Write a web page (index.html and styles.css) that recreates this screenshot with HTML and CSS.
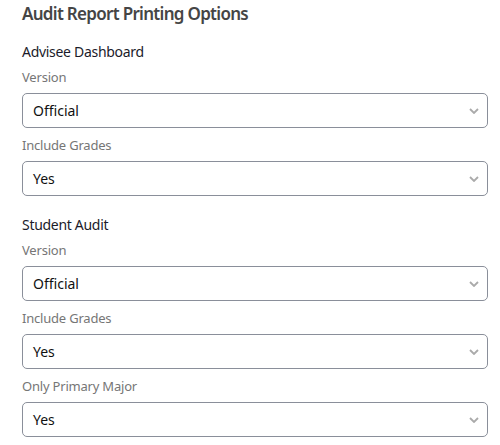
FILE: index.html
```html
<!DOCTYPE html>
<html lang="en">
<head>
    <meta charset="UTF-8">
    <title>Audit Report Printing Options</title>
    <link rel="stylesheet" href="styles.css">
</head>
<body>
    <div class="page">
        <h2 class="page-title">Audit Report Printing Options</h2>

        <div class="section">
            <h3 class="section-title">Advisee Dashboard</h3>
            <div class="field">
                <label>Version</label>
                <div class="select-box">
                    <span>Official</span>
                    <svg class="chevron" width="10" height="6" viewBox="0 0 10 6"><path d="M1 1l4 4 4-4" fill="none" stroke="#aaa" stroke-width="1.8"/></svg>
                </div>
            </div>
            <div class="field">
                <label>Include Grades</label>
                <div class="select-box">
                    <span>Yes</span>
                    <svg class="chevron" width="10" height="6" viewBox="0 0 10 6"><path d="M1 1l4 4 4-4" fill="none" stroke="#aaa" stroke-width="1.8"/></svg>
                </div>
            </div>
        </div>

        <div class="section">
            <h3 class="section-title">Student Audit</h3>
            <div class="field">
                <label>Version</label>
                <div class="select-box">
                    <span>Official</span>
                    <svg class="chevron" width="10" height="6" viewBox="0 0 10 6"><path d="M1 1l4 4 4-4" fill="none" stroke="#aaa" stroke-width="1.8"/></svg>
                </div>
            </div>
            <div class="field">
                <label>Include Grades</label>
                <div class="select-box">
                    <span>Yes</span>
                    <svg class="chevron" width="10" height="6" viewBox="0 0 10 6"><path d="M1 1l4 4 4-4" fill="none" stroke="#aaa" stroke-width="1.8"/></svg>
                </div>
            </div>
            <div class="field">
                <label>Only Primary Major</label>
                <div class="select-box">
                    <span>Yes</span>
                    <svg class="chevron" width="10" height="6" viewBox="0 0 10 6"><path d="M1 1l4 4 4-4" fill="none" stroke="#aaa" stroke-width="1.8"/></svg>
                </div>
            </div>
        </div>
    </div>
</body>
</html>
```

FILE: styles.css
```css
body {
    margin: 0;
    font-family: "Noto Sans", "Open Sans", sans-serif;
    background: #fff;
}
.page {
    width: 466px;
    padding: 1px 0 0 22px;
}
.page-title {
    margin: 0 0 14px;
    font-size: 17px;
    line-height: 26px;
    font-weight: 600;
    letter-spacing: -0.7px;
    color: #454545;
}
.section + .section {
    margin-top: 18px;
}
.section-title {
    margin: 0;
    font-size: 14px;
    line-height: 22px;
    font-weight: 400;
    letter-spacing: -0.3px;
    color: #1b1b2a;
}
.field {
    margin-top: 4px;
}
.field + .field {
    margin-top: 7px;
}
.field label {
    display: block;
    margin-bottom: 6px;
    font-size: 13px;
    line-height: 20px;
    letter-spacing: -0.2px;
    color: #767676;
}
.select-box {
    box-sizing: border-box;
    height: 35px;
    display: flex;
    align-items: center;
    justify-content: space-between;
    padding: 0 8px 0 10px;
    border: 1px solid #8a8f9a;
    border-radius: 5px;
    font-size: 14px;
    color: #111;
}
.chevron {
    display: block;
}
```
